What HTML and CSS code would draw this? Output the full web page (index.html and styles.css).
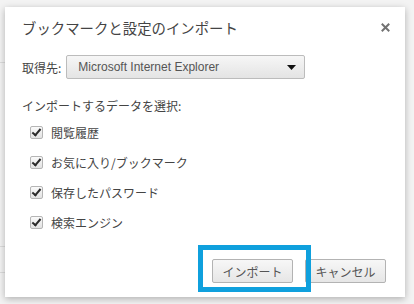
FILE: index.html
```html
<!DOCTYPE html>
<html lang="ja">
<head>
  <meta charset="UTF-8">
  <meta name="viewport" content="width=device-width, initial-scale=1.0">
  <title>ブックマークと設定のインポート</title>
  <link rel="stylesheet" href="styles.css">
</head>
<body>
  <div class="backdrop">
    <span class="ghost-line" style="top: 62px"></span>
    <span class="ghost-line" style="top: 246px"></span>
    <span class="ghost-line" style="top: 272px"></span>
  </div>

  <div class="dialog">
    <div class="dialog-head">
      <h1 class="title">ブックマークと設定のインポート</h1>
      <button class="close" aria-label="閉じる">
        <svg width="9" height="9" viewBox="0 0 9 9">
          <path d="M1.5 1.5L7.5 7.5M7.5 1.5L1.5 7.5" stroke="#727272" stroke-width="2" stroke-linecap="square"/>
        </svg>
      </button>
    </div>

    <div class="source-row">
      <span class="source-label">取得先:</span>
      <div class="select">
        <span>Microsoft Internet Explorer</span>
        <svg class="select-arrow" width="9" height="5" viewBox="0 0 9 5">
          <path d="M0 0H9L4.5 5Z" fill="#111"/>
        </svg>
      </div>
    </div>

    <div class="section-label">インポートするデータを選択:</div>
    <ul class="options">
      <li><span class="check"></span>閲覧履歴</li>
      <li><span class="check"></span>お気に入り/ブックマーク</li>
      <li><span class="check"></span>保存したパスワード</li>
      <li><span class="check"></span>検索エンジン</li>
    </ul>

    <div class="actions">
      <span class="highlight">
        <button class="btn">インポート</button>
      </span>
      <button class="btn">キャンセル</button>
    </div>
  </div>
</body>
</html>
```

FILE: styles.css
```css
body {
  margin: 0;
  padding: 0;
  width: 414px;
  height: 304px;
  overflow: hidden;
  background-color: #f3f3f3;
  font-family: "Noto Sans CJK JP", "Liberation Sans", sans-serif;
  color: #444;
  position: relative;
}

.backdrop {
  position: absolute;
  inset: 0;
}

.ghost-line {
  position: absolute;
  left: 0;
  width: 6px;
  height: 1px;
  background-color: #dcdcdc;
}

.dialog {
  position: relative;
  margin: 7px 9px 0 5px;
  height: 290px;
  box-sizing: border-box;
  padding: 11px 19px 0 17px;
  background-color: white;
  box-shadow: 0 2px 7px rgba(0, 0, 0, 0.28);
}

.dialog-head {
  display: flex;
  justify-content: space-between;
  align-items: flex-start;
}

.title {
  margin: 0;
  font-size: 14.4px;
  font-weight: normal;
  line-height: 20px;
  color: #444;
}

.close {
  margin: 5px -4px 0 0;
  padding: 0;
  border: none;
  background: none;
  line-height: 0;
}

.source-row {
  display: flex;
  align-items: center;
  gap: 5px;
  margin-top: 17px;
}

.source-label {
  font-size: 12px;
  color: #444;
}

.select {
  width: 239px;
  height: 24px;
  box-sizing: border-box;
  display: flex;
  align-items: center;
  justify-content: space-between;
  padding: 0 8px 0 11px;
  border: 1px solid #bcbcbc;
  border-radius: 2px;
  background: linear-gradient(#f6f6f6, #e4e4e4);
  font-family: "Liberation Sans", sans-serif;
  font-size: 12px;
  color: #555;
}

.section-label {
  margin-top: 19px;
  font-size: 12px;
  line-height: 16px;
  color: #444;
}

.options {
  list-style: none;
  margin: 3px 0 0 8px;
  padding: 0;
}

.options li {
  height: 30px;
  display: flex;
  align-items: center;
  gap: 8px;
  font-size: 12px;
  color: #444;
}

.check {
  width: 13px;
  height: 13px;
  box-sizing: border-box;
  border: 1px solid #b5b5b5;
  border-radius: 2px;
  background: linear-gradient(#fafafa, #e2e2e2);
  position: relative;
}

.check::after {
  content: "";
  position: absolute;
  left: 3px;
  top: 0px;
  width: 3px;
  height: 7px;
  border: solid #2a2a2a;
  border-width: 0 2px 2px 0;
  transform: rotate(40deg);
}

.actions {
  display: flex;
  justify-content: flex-end;
  gap: 12px;
  margin-top: 22px;
}

.btn {
  width: 81px;
  height: 24px;
  padding: 0;
  border: 1px solid #b3b3b3;
  border-radius: 2px;
  background: linear-gradient(#f7f7f7, #e6e6e6);
  font-family: "Noto Sans CJK JP", sans-serif;
  font-size: 12px;
  color: #555;
}

.highlight {
  position: relative;
  display: flex;
}

.highlight::after {
  content: "";
  position: absolute;
  left: -14px;
  top: -14px;
  right: -18px;
  bottom: -9px;
  border: 5px solid #0fa0dd;
}
```
